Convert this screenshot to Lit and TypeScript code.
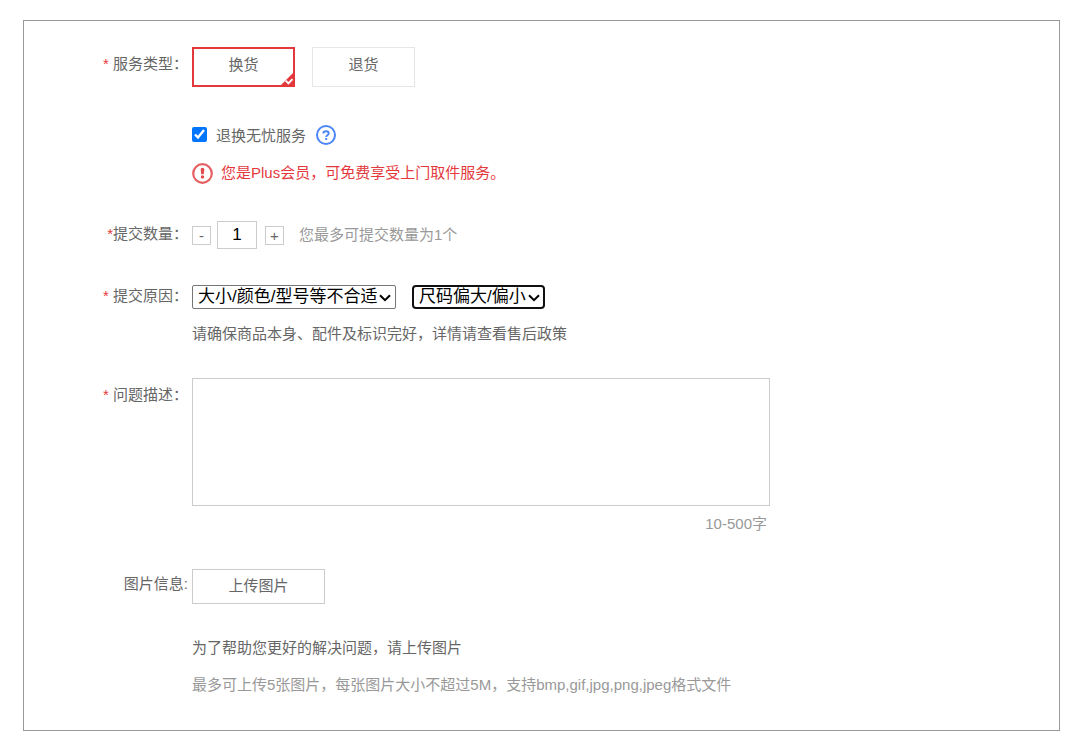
import { LitElement, html, css, svg } from "lit";
import { customElement, state } from "lit/decorators.js";

const helpIcon = svg`<circle cx="10" cy="10" r="9" fill="none" stroke="#4a86f7" stroke-width="2"/>
  <path d="M7.4 8.6c0-1.5 1.1-2.3 2.7-2.3s2.6.9 2.6 2.2c0 1.8-2.5 1.7-2.5 3.4" fill="none" stroke="#4a86f7" stroke-width="2"/>
  <rect x="9.2" y="13" width="2" height="2" fill="#4a86f7"/>`;

const alertIcon = svg`<circle cx="10.5" cy="10.5" r="9.3" fill="none" stroke="#e65f62" stroke-width="2.2"/>
  <path d="M8.7 6.6a1.8 1.8 0 0 1 3.6 0l-.6 4.7H9.3z" fill="#e4494c"/>
  <circle cx="10.5" cy="13.9" r="1.7" fill="#e4494c"/>`;

const chevron = html`<svg class="chevron" viewBox="0 0 12 8" aria-hidden="true">
  <path d="M1 1.2l5 5 5-5" fill="none" stroke="#000" stroke-width="2"/>
</svg>`;

@customElement("app-root")
export class AppRoot extends LitElement {
  static styles = css`
    :host {
      display: block;
      padding: 20px 23px 4px;
      font: 15px/22px "Liberation Sans", "Noto Sans CJK SC", sans-serif;
      color: #666;
      background: #fff;
    }
    * { box-sizing: border-box; }
    button, input, select, textarea { font-family: inherit; margin: 0; }
    p { margin: 0; }
    .frame {
      display: flex;
      flex-direction: column;
      border: 1px solid #999;
      padding: 26px 24px 34px 0;
    }
    .row {
      display: grid;
      grid-template-columns: 168px minmax(0, 1fr);
    }
    .row + .row { margin-top: 36px; }
    .row + .row.far { margin-top: 37px; }
    .row + .row.near { margin-top: 33px; }
    .label {
      justify-self: end;
      align-self: start;
      padding: 6px 4px 0 0;
      white-space: nowrap;
    }
    .label.mid { padding-top: 4px; }
    .label.high { padding-top: 2px; }
    .label.top { padding-top: 0; }
    .star { color: #e4393c; }
    .line { display: flex; align-items: center; }
    .options { gap: 17px; }
    .option {
      position: relative;
      width: 103px;
      height: 40px;
      padding: 0 0 4px;
      border: 1px solid #e6e6e6;
      background: #fff;
      color: #666;
      font-size: 15px;
      line-height: 22px;
    }
    .option.selected { border: 2px solid #e4393c; }
    .corner { position: absolute; right: -2px; bottom: -2px; width: 16px; height: 16px; }
    .service { margin-top: 35px; }
    .service label { display: flex; align-items: center; gap: 9px; }
    .service label span { padding-top: 3px; }
    .service input { width: 15px; height: 15px; }
    .icon { display: block; width: 21px; height: 21px; flex: none; }
    .icon.help { width: 20px; height: 20px; margin-left: 10px; }
    .alert { margin-top: 15px; gap: 8px; align-items: flex-end; color: #e4393c; }
    .step {
      width: 19px;
      height: 19px;
      padding: 0;
      border: 1px solid #ccc;
      background: #fff;
      color: #666;
      font-size: 15px;
      line-height: 17px;
    }
    .count {
      width: 40px;
      height: 28px;
      margin: 0 8px 0 6px;
      padding: 0;
      border: 1px solid #ccc;
      text-align: center;
      font-size: 17px;
      color: #000;
    }
    .muted { color: #999; }
    .limit { margin-left: 15px; }
    .reasons { gap: 16px; }
    .pick { position: relative; display: flex; }
    .chevron {
      position: absolute;
      right: 5px;
      top: 9px;
      width: 12px;
      height: 8px;
      pointer-events: none;
    }
    select {
      appearance: none;
      width: 100%;
      height: 24px;
      padding: 0 0 0 5px;
      font-size: 17px;
      line-height: 20px;
      color: #000;
      background: #fff;
      border: 1px solid #767676;
      border-radius: 2px;
    }
    .reason { width: 204px; }
    .detail { width: 133px; }
    .detail select { border: 2px solid #101010; border-radius: 4px; }
    .hint { margin-top: 14px; }
    .desc {
      display: block;
      width: 100%;
      height: 128px;
      border: 1px solid #ccc;
      resize: none;
      font-size: 15px;
    }
    .field { max-width: 578px; }
    .counter { margin-top: 7px; padding: 0 3px 1px 0; text-align: right; color: #999; }
    .upload {
      width: 133px;
      height: 35px;
      padding: 0 0 4px;
      border: 1px solid #ccc;
      background: #fff;
      color: #666;
      font-size: 15px;
    }
    .note { margin-top: 33px; }
    .formats { margin-top: 15px; }
  `;

  @state() private kind = "换货";
  @state() private count = 1;

  private renderOption(name: string) {
    const on = this.kind === name;
    return html`<button type="button" class="option ${on ? "selected" : ""}" aria-pressed=${on}
      @click=${() => (this.kind = name)}>${name}${on
        ? html`<svg class="corner" viewBox="0 0 16 16" aria-hidden="true">
            <path d="M16 0v16H0z" fill="#e4393c"/>
            <path d="M6.6 9.6l2.8 2.7 4.1-4.1" fill="none" stroke="#fff" stroke-width="1.9"/>
          </svg>`
        : ""}</button>`;
  }

  render() {
    return html`<form class="frame" lang="zh-CN" @submit=${(e: Event) => e.preventDefault()}>
      <div class="row">
        <span class="label"><span class="star">*</span> 服务类型：</span>
        <div>
          <div class="line options">${this.renderOption("换货")}${this.renderOption("退货")}</div>
          <div class="line service">
            <label><input type="checkbox" checked><span>退换无忧服务</span></label>
            <svg class="icon help" viewBox="0 0 20 20" aria-hidden="true">${helpIcon}</svg>
          </div>
          <p class="line alert">
            <svg class="icon" viewBox="0 0 21 21" aria-hidden="true">${alertIcon}</svg>
            <span>您是Plus会员，可免费享受上门取件服务。</span>
          </p>
        </div>
      </div>
      <div class="row far">
        <label class="label high" for="count"><span class="star">*</span>提交数量：</label>
        <div class="line">
          <button type="button" class="step" @click=${() => (this.count = Math.max(1, this.count - 1))}>-</button>
          <input class="count" id="count" type="text" .value=${String(this.count)}>
          <button type="button" class="step">+</button>
          <span class="muted limit">您最多可提交数量为1个</span>
        </div>
      </div>
      <div class="row">
        <label class="label top" for="reason"><span class="star">*</span> 提交原因：</label>
        <div>
          <div class="line reasons">
            <div class="pick reason"><select id="reason"><option>大小/颜色/型号等不合适</option></select>${chevron}</div>
            <div class="pick detail"><select aria-label="提交原因"><option>尺码偏大/偏小</option></select>${chevron}</div>
          </div>
          <p class="hint">请确保商品本身、配件及标识完好，详情请查看售后政策</p>
        </div>
      </div>
      <div class="row near">
        <label class="label" for="desc"><span class="star">*</span> 问题描述：</label>
        <div class="field">
          <textarea class="desc" id="desc"></textarea>
          <p class="counter">10-500字</p>
        </div>
      </div>
      <div class="row near">
        <label class="label mid" for="upload">图片信息:</label>
        <div>
          <button type="button" class="upload" id="upload">上传图片</button>
          <p class="note">为了帮助您更好的解决问题，请上传图片</p>
          <p class="formats muted">最多可上传5张图片，每张图片大小不超过5M，支持bmp,gif,jpg,png,jpeg格式文件</p>
        </div>
      </div>
    </form>`;
  }
}
